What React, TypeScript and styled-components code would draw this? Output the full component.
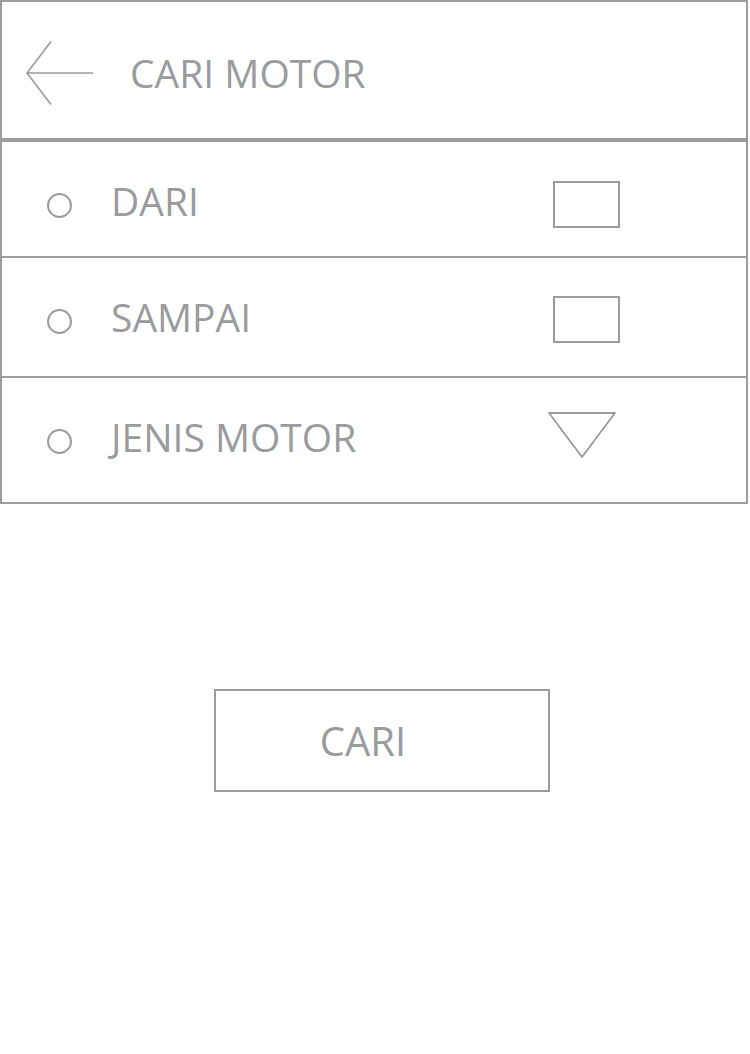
import React from "react";
import styled, { createGlobalStyle } from "styled-components";

const GRAY = "#999b9e";

const Global = createGlobalStyle`
  html, body { margin: 0; padding: 0; background: #fff; }
  body { font-family: "Open Sans", "Noto Sans", sans-serif; color: ${GRAY}; }
`;

const Page = styled.div`
  width: 750px;
  height: 1054px;
  background: #fff;
`;

const Panel = styled.div`
  width: 748px;
  box-sizing: border-box;
  border: 2px solid ${GRAY};
`;

const Header = styled.div`
  height: 136px;
  border-bottom: 4px solid ${GRAY};
  display: flex;
  align-items: center;
  padding-left: 22px;
  padding-top: 6px;
  box-sizing: border-box;
  height: 140px;
  gap: 34px;
`;

const Title = styled.span`
  font-size: 39px;
  line-height: 1;
  margin-top: -2px;
`;

const Row = styled.div<{ $h: number; $last?: boolean }>`
  height: ${(p) => p.$h}px;
  box-sizing: border-box;
  border-bottom: ${(p) => (p.$last ? "none" : `2px solid ${GRAY}`)};
  display: grid;
  grid-template-columns: 45px 24px 40px 441px auto;
  align-items: start;
  padding-top: 38px;
`;

const Dot = styled.div<{ $top: number }>`
  grid-column: 2;
  width: 25px;
  height: 25px;
  box-sizing: border-box;
  border: 2px solid ${GRAY};
  border-radius: 50%;
  margin-top: ${(p) => p.$top}px;
`;

const Label = styled.span<{ $top: number }>`
  grid-column: 4;
  font-size: 39px;
  line-height: 1;
  margin-top: ${(p) => p.$top}px;
  white-space: nowrap;
`;

const Box = styled.div<{ $top: number }>`
  grid-column: 5;
  width: 67px;
  height: 47px;
  box-sizing: border-box;
  border: 2px solid ${GRAY};
  margin-left: 1px;
  margin-top: ${(p) => p.$top}px;
`;

const Caret = styled.svg<{ $top: number }>`
  grid-column: 5;
  margin-left: -4px;
  margin-top: ${(p) => p.$top}px;
  display: block;
`;

const ButtonArea = styled.div`
  display: flex;
  justify-content: flex-start;
  padding-top: 185px;
  padding-left: 214px;
`;

const SearchButton = styled.button`
  width: 336px;
  height: 103px;
  box-sizing: border-box;
  border: 2px solid ${GRAY};
  background: #fff;
  color: ${GRAY};
  font-family: "Open Sans", "Noto Sans", sans-serif;
  font-size: 40px;
  padding: 0 38px 0 0;
  display: flex;
  align-items: center;
  justify-content: center;
  cursor: pointer;
`;

const BackIcon = () => (
  <svg width="72" height="66" viewBox="0 0 72 66" style={{ display: "block" }}>
    <path
      d="M27 1.5 L3 33 L27 64.5 M3 33 L69 33"
      fill="none"
      stroke={GRAY}
      strokeWidth="1.6"
    />
  </svg>
);

export default function App() {
  return (
    <Page>
      <Global />
      <Panel>
        <Header>
          <BackIcon />
          <Title>CARI MOTOR</Title>
        </Header>
        <Row $h={116}>
          <Dot $top={13} />
          <Label $top={1}>DARI</Label>
          <Box $top={1} />
        </Row>
        <Row $h={120}>
          <Dot $top={13} />
          <Label $top={1}>SAMPAI</Label>
          <Box $top={0} />
        </Row>
        <Row $h={124} $last>
          <Dot $top={13} />
          <Label $top={1}>JENIS MOTOR</Label>
          <Caret $top={-4} width="68" height="46" viewBox="0 0 68 46">
            <path d="M1 1 L67 1 L34 45 Z" fill="none" stroke={GRAY} strokeWidth="1.8" strokeLinejoin="round" />
          </Caret>
        </Row>
      </Panel>
      <ButtonArea>
        <SearchButton>CARI</SearchButton>
      </ButtonArea>
    </Page>
  );
}
